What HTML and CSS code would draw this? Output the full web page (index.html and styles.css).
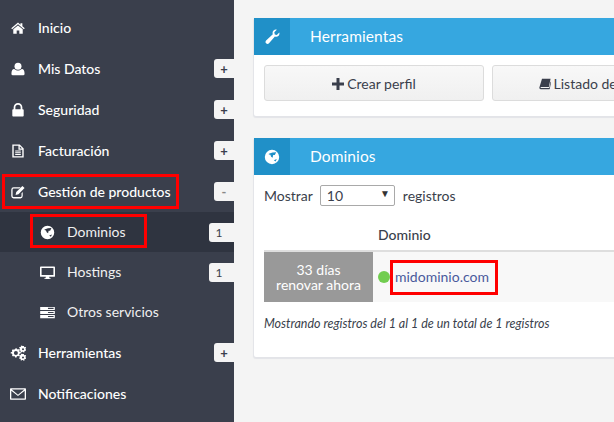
FILE: index.html
```html
<!DOCTYPE html>
<html lang="es">
<head>
<meta charset="utf-8">
<title>Dominios</title>
<link rel="stylesheet" href="styles.css">
</head>
<body>
<div class="app">
  <nav class="sidebar">
    <a class="item">
      <svg class="ico" viewBox="0 0 16 16"><path d="M8 1.800 0.300 8.300l1 1.100L8 3.800l6.700 5.600 1-1.100-2.700-2.300V2.500h-2.200v1.800zM8 5 2.600 9.500V14.500h3.900v-3.600h3v3.600h3.900V9.500z"/></svg>
      <span class="label">Inicio</span>
    </a>
    <a class="item">
      <svg class="ico" viewBox="0 0 16 16"><circle cx="8" cy="4.800" r="4"/><path d="M1.800 15c-1 0-1.300-.7-1.300-1.500 0-3.300 1-5.500 3.200-5.500 1 1 2.600 1.700 4.300 1.700s3.300-.7 4.300-1.700c2.200 0 3.200 2.200 3.200 5.500 0 .8-.3 1.500-1.300 1.500z"/></svg>
      <span class="label">Mis Datos</span><span class="pill">+</span>
    </a>
    <a class="item">
      <svg class="ico" viewBox="0 0 16 16"><path fill-rule="evenodd" d="M3 7V5a5 5 0 0 1 10 0v2h.6c.5 0 .9.400.9.900v6.700c0 .5-.4.900-.9.900H2.400c-.5 0-.9-.4-.9-.9V7.900c0-.5.400-.9.900-.9zm2-0h6V5a3 3 0 0 0-6 0z"/></svg>
      <span class="label">Seguridad</span><span class="pill">+</span>
    </a>
    <a class="item">
      <svg class="ico" viewBox="0 0 16 16"><path fill-rule="evenodd" d="M1.500 .5h8.500l4.500 4.500v10.500h-13zM3.100 2.100v11.800h9.800V6.500H8.500V2.100zM10 2.500v2.500h2.500zM4.800 7.500h6.400v1.200H4.800zM4.800 9.500h6.400v1.200H4.800zM4.800 11.500h6.400v1.200H4.800z"/></svg>
      <span class="label">Facturación</span><span class="pill">+</span>
    </a>
    <a class="item marked">
      <svg class="ico" viewBox="0 0 16 16"><path d="M12 9.500v3a1.200 1.200 0 0 1-1.200 1.200H3a1.200 1.200 0 0 1-1.200-1.200V5.300A1.200 1.200 0 0 1 3 4.100h6.500L11 2.700H3A2.700 2.700 0 0 0 .3 5.300v7.400A2.700 2.700 0 0 0 3 15.300h7.800a2.700 2.700 0 0 0 2.600-2.600V8.100z"/><path d="M13 1l2.500 2.500-7 7-3.300.8.800-3.300z"/></svg>
      <span class="label">Gestión de productos</span><span class="pill dim">-</span>
    </a>
    <div class="sub">
      <a class="subitem active">
        <span class="subtag marked">
          <svg class="ico" viewBox="0 0 16 16"><path fill-rule="evenodd" d="M8 .8a7.200 7.200 0 1 0 0 14.400A7.200 7.200 0 0 0 8 .8zM4.800 4.800l3.700-1.300 3.700-.3-1.400 2.800-1.600.1-.6 2.700-1.500-1-.7-2-1.600-.4zM9.800 11.200l3-1.200-1.200 2.500z"/></svg>
          <span class="label">Dominios</span>
        </span>
        <span class="pill num">1</span>
      </a>
      <a class="subitem">
        <svg class="ico" viewBox="0 0 16 16"><path fill-rule="evenodd" d="M.9 1.500h14.200c.6 0 .9.300.9.900v9.200c0 .6-.3.900-.9.900H9.800l.3 1.500h1.200v1H4.700v-1h1.200l.3-1.500H.9c-.6 0-.9-.3-.9-.9V2.400c0-.6.300-.9.900-.9zm.8 1.700v7.400h12.600V3.200z"/></svg>
        <span class="label">Hostings</span><span class="pill num">1</span>
      </a>
      <a class="subitem">
        <svg class="ico" viewBox="0 0 16 16"><path d="M.2 2h15.600v3.400H.2zM.2 6.300h15.600v3.400H.2zM.2 10.600h15.600V14H.2z"/><path class="cut" d="M8.500 3h6v1.200h-6zM8.500 7.400h6v1.200h-6zM8.500 11.700h6v1.200h-6z"/></svg>
        <span class="label">Otros servicios</span>
      </a>
    </div>
    <a class="item">
      <svg class="ico wide" viewBox="0 0 16 16"><path fill-rule="evenodd" d="M5.800 3.300l1.100.2.500.9 1-.3.900.9-.4 1 .9.700 1 .1v1.500l-1 .2-.6.900.4 1-1 .9-1-.4-.9.600-.1 1H5.100l-.2-1-.9-.5-1 .4-1-1 .4-1-.6-.9-1.100-.1V7.300l1.100-.2.500-.9-.4-1 1-.9 1 .4.900-.5zM5.900 6a2 2 0 1 0 0 4 2 2 0 0 0 0-4z"/><path fill-rule="evenodd" d="M12.900 .9l1 .1.200.8.800.4.700-.4.500.8-.5.700v1l.6.500-.3 1-.9-.1-.6.700.1.900-1 .3-.5-.8h-.9l-.5.700-1-.4.200-.9-.6-.6-.9.100-.3-1 .8-.4v-1l-.7-.5.400-.9.900.2.600-.6-.1-.9zm.1 2.400a1 1 0 1 0 0 2 1 1 0 0 0 0-2zM12.900 9l1 .1.200.8.800.4.700-.4.500.8-.5.700v1l.6.500-.3 1-.9-.1-.6.700.1.900-1 .3-.5-.8h-.9l-.5.700-1-.4.200-.9-.6-.6-.9.100-.3-1 .8-.4v-1l-.7-.5.400-.9.900.2.600-.6-.1-.9zm.1 2.400a1 1 0 1 0 0 2 1 1 0 0 0 0-2z"/></svg>
      <span class="label">Herramientas</span><span class="pill">+</span>
    </a>
    <a class="item">
      <svg class="ico wide" viewBox="0 0 16 16"><path fill-rule="evenodd" d="M1 2.300h14c.6 0 1 .4 1 1v9.400c0 .6-.4 1-1 1H1c-.6 0-1-.4-1-1V3.300c0-.6.400-1 1-1zm.3 2.500v7.600h13.400V4.800L8 10zm.5-1.200L8 8.700l6.200-5.100z"/></svg>
      <span class="label">Notificaciones</span>
    </a>
  </nav>
  <main class="content">
    <section class="panel">
      <header class="panel-head">
        <span class="panel-ico">
          <svg class="head-svg" viewBox="0 0 16 16"><path d="M15.300 3.600c.3.900.2 2.300-.7 3.200-1.100 1.100-2.500 1.200-3.700.8L5 14.300c-.8.800-2.100.8-2.900 0s-.8-2.100 0-2.900l6.700-6.200C8.400 4 8.500 2.600 9.600 1.500 10.500.6 11.900.400 12.800.800L10.300 3.300l.5 2.100 2 .5z"/></svg>
        </span>
        <h2 class="panel-title">Herramientas</h2>
      </header>
      <div class="panel-body tools">
        <button class="btn" type="button">
          <svg class="btn-svg" viewBox="0 0 12 12"><path d="M4.500 0h3v4.500H12v3H7.500V12h-3V7.500H0v-3h4.500z"/></svg><span class="btn-text">Crear perfil</span>
        </button>
        <button class="btn" type="button">
          <svg class="btn-svg" viewBox="0 0 14 14"><path d="M3.500 1h10l-2 9.500H2.500c-.8 0-1 .9-.3 1.100h9.800l1.500-7.400.6.500-1.500 7.900c0 .3-.3.400-.6.400H2C.8 13 .2 12 .5 10.800z"/></svg><span class="btn-text">Listado de perfiles</span>
        </button>
      </div>
    </section>
    <section class="panel">
      <header class="panel-head">
        <span class="panel-ico">
          <svg class="head-svg" viewBox="0 0 16 16"><path fill-rule="evenodd" d="M8 .8a7.200 7.200 0 1 0 0 14.400A7.200 7.200 0 0 0 8 .8zM4.800 4.800l3.700-1.300 3.700-.3-1.400 2.800-1.600.1-.6 2.700-1.500-1-.7-2-1.600-.4zM9.800 11.200l3-1.200-1.200 2.500z"/></svg>
        </span>
        <h2 class="panel-title">Dominios</h2>
      </header>
      <div class="panel-body listing">
        <div class="length">
          Mostrar
          <span class="select">10<i class="caret">▼</i></span>
          registros
        </div>
        <div class="thead"><span class="th">Dominio</span></div>
        <div class="row">
          <div class="expiry">33 días<br>renovar ahora</div>
          <div class="domain">
            <span class="dot"></span>
            <a class="domain-link marked">midominio.com</a>
          </div>
        </div>
        <p class="info">Mostrando registros del 1 al 1 de un total de 1 registros</p>
      </div>
    </section>
  </main>
</div>
</body>
</html>
```

FILE: styles.css
```css
*, *::after { box-sizing: border-box; }
html, body { margin: 0; height: 100%; overflow: hidden; }
body { font-family: Lato, sans-serif; font-size: 14px; color: #3a3f4c; background: #f4f4f4; }
.app { display: flex; width: 614px; height: 422px; overflow: hidden; }

.sidebar { flex: 0 0 234px; width: 234px; padding-top: 7px; background: #3a3f4c; color: #fff; font-size: 14px; font-weight: 500; }
.item { display: flex; align-items: center; height: 41px; padding-left: 11px; position: relative; }
.subitem { display: flex; align-items: center; height: 40px; padding-left: 40px; position: relative; font-weight: 400; color: #f0f0f0; }
.sub { display: flex; flex-direction: column; }
.active { background: #2f3440; }
.subtag { display: flex; align-items: center; position: relative; }
.label { position: relative; }
.subitem .label { top: -1px; }
.ico { flex: 0 0 14px; width: 14px; height: 14px; margin-right: 13px; fill: #fff; }
.ico.wide { flex-basis: 16px; width: 16px; height: 16px; margin: 0 12px 0 -1px; }
.subitem .ico { width: 15px; height: 15px; flex-basis: 15px; margin-right: 12px; }
.cut { fill: #3a3f4c; }
.pill { margin-left: auto; display: flex; align-items: center; justify-content: center; width: 20px; height: 19px; background: #f4f4f4; color: #3a3f4c; font-size: 13px; font-weight: 700; border-radius: 3px 0 0 3px; }
.pill.dim { color: #888; }
.pill.num { width: 25px; padding-right: 5px; font-size: 12px; font-weight: 400; }

.marked::after { content: ""; position: absolute; border: 3px solid #f00; pointer-events: none; }
.item.marked::after { left: 2px; top: 3px; width: 177px; height: 35px; }
.subtag.marked::after { left: -10px; top: -10px; width: 117px; height: 34px; }

.content { flex: 1; min-width: 0; padding: 18px 0 0 20px; overflow: hidden; }
.panel { width: 420px; margin-bottom: 22px; background: #fff; border-radius: 2px; box-shadow: 0 1px 1px 1px #e3e4e8; }
.panel-head { display: flex; align-items: center; height: 37px; background: #36a7e0; color: #fff; }
.panel-ico { display: flex; align-items: center; justify-content: center; flex: 0 0 36px; height: 37px; background: #2090c8; }
.head-svg { width: 16px; height: 16px; fill: #fff; }
.panel-title { margin: 0 0 2px 20px; font-size: 15.500px; font-weight: 400; letter-spacing: .1px; }
.panel-body { padding: 10px; }
.tools { display: flex; gap: 8px; height: 61px; overflow: hidden; }
.btn { flex: 0 0 220px; height: 36px; padding: 0; border: 1px solid #dcdcdc; border-radius: 3px; background: linear-gradient(#f8f8f8, #f0f0f0); font: 400 14px Lato, sans-serif; color: #3a3f4c; white-space: nowrap; }
.btn-svg { width: 12px; height: 12px; fill: #3a3f4c; vertical-align: -1px; }
.btn-text { margin-left: 3px; }
.listing { padding-bottom: 26px; height: 182px; }
.length { display: flex; align-items: center; height: 21px; font-size: 14px; }
.select { position: relative; display: block; width: 75px; height: 21px; margin: 0 8px 0 7px; padding-left: 6px; border: 1px solid #a9a9a9; border-radius: 2px; line-height: 19px; background: #fff; }
.caret { position: absolute; right: 4px; top: 0; font-size: 10px; font-style: normal; line-height: 15px; color: #333; }
.thead { height: 37px; margin: 9px -10px 0 0; padding: 10px 0 0 114px; border-bottom: 2px solid #dedede; }
.th { font-weight: 500; font-size: 14px; line-height: 20px; }
.row { display: flex; height: 50px; background: #f8f8f8; margin-right: -10px; }
.expiry { display: flex; align-items: center; justify-content: center; flex: 0 0 109px; background: #999; color: #fff; text-align: center; font-size: 14px; line-height: 15.500px; }
.domain { display: flex; align-items: center; padding-left: 5px; position: relative; }
.dot { width: 12px; height: 12px; border-radius: 50%; background: #72cd50; }
.domain-link { margin: 0 0 1px 5px; color: #4a5a9c; font-size: 14px; position: relative; }
.domain-link.marked::after { left: -5px; top: -8px; width: 108px; height: 35px; }
.info { margin: 14px 0 0; font-size: 12.500px; font-style: italic; line-height: 16px; }
```
